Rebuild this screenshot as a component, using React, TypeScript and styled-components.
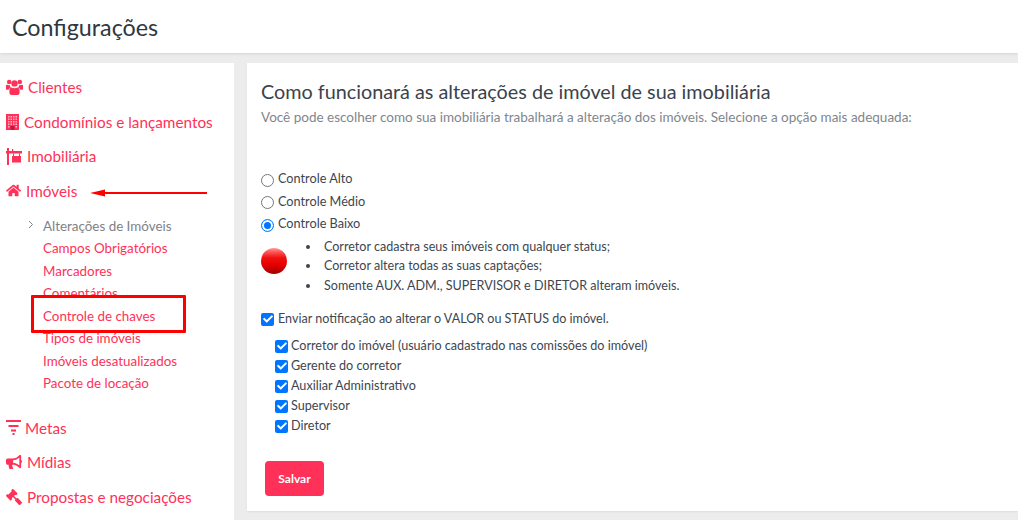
import { FC, ReactNode } from 'react';
import styled, { createGlobalStyle } from 'styled-components';
import { FaHome, FaBullhorn, FaGavel, FaCheck } from 'react-icons/fa';

const GlobalStyle = createGlobalStyle`
    html, body {
        margin: 0;
        padding: 0;
        height: 520px;
        overflow: hidden;
        background: #ececec;
        font-family: Lato, "Liberation Sans", sans-serif;
        color: #3c4650;
    }
    * {
        box-sizing: border-box;
    }
`;

const Page = styled.div`
    position: relative;
    width: 1018px;
    height: 520px;
    overflow: hidden;
`;

const Header = styled.header`
    height: 53px;
    background: #fff;
    padding: 12px 12px 0;
    box-shadow: 0 1px 3px rgba(0, 0, 0, 0.1);
`;

const Title = styled.h1`
    margin: 0;
    font-size: 23.3px;
    line-height: 30px;
    font-weight: 400;
    color: #2f3840;
`;

const Body = styled.div`
    display: flex;
    gap: 13px;
    padding-top: 10px;
`;

const Sidebar = styled.nav`
    width: 234px;
    height: 457px;
    background: #fff;
    padding: 7px 0 0 6px;
`;

const NavItem = styled.a<{ $gap?: number }>`
    display: flex;
    align-items: center;
    height: 34.5px;
    font-size: 15.3px;
    color: #ff3158;
    gap: ${(p) => p.$gap ?? 5}px;

    svg {
        flex: none;
        color: #ff3158;
    }
`;

const SubList = styled.div`
    padding: 6.5px 0 16.2px 37px;
`;

const SubItem = styled.a<{ $active?: boolean }>`
    position: relative;
    display: block;
    height: 22.5px;
    line-height: 22.5px;
    font-size: 13.4px;
    color: ${(p) => (p.$active ? '#7d8288' : '#ff3158')};
`;

const Chevron = styled.svg`
    position: absolute;
    left: -15px;
    top: 5px;
`;

const FlippedGavel = styled(FaGavel)`
    transform: scaleX(-1);
`;

const Main = styled.main`
    width: 771px;
    height: 448px;
    background: #fff;
    padding: 14px 14px;
    box-shadow: 0 1px 2px rgba(0, 0, 0, 0.06);
`;

const Heading = styled.h2`
    margin: 0;
    font-size: 19.8px;
    line-height: 28px;
    font-weight: 400;
    color: #3a434c;
`;

const Subheading = styled.p`
    margin: 2px 0 0;
    font-size: 13.5px;
    line-height: 20px;
    color: #7f868d;
`;

const RadioGroup = styled.div`
    margin-top: 40px;
`;

const RadioRow = styled.label`
    display: flex;
    align-items: center;
    height: 22.5px;
    font-size: 12.7px;
    gap: 4px;
    color: #3c4650;
`;

const RadioCircle = styled.span<{ $checked?: boolean }>`
    display: inline-block;
    width: 13px;
    height: 13px;
    margin-top: 4px;
    border-radius: 50%;
    background: #fff;
    border: 1px solid ${(p) => (p.$checked ? '#0075ff' : '#767676')};
    box-shadow: ${(p) => (p.$checked ? 'inset 0 0 0 2px #fff, inset 0 0 0 7px #0075ff' : 'none')};
`;

const Detail = styled.div`
    display: flex;
    align-items: center;
    margin-top: 2px;
`;

const Ball = styled.span`
    width: 26px;
    height: 26px;
    margin-top: -10px;
    border-radius: 50%;
    background: linear-gradient(#ff9c9c 0%, #ff5a5a 14%, #f01010 38%, #e80000 62%, #c40000 82%, #a00000 100%);
`;

const Bullets = styled.ul`
    margin: 0;
    padding: 0 0 0 34px;
    font-size: 12.55px;
    line-height: 19.5px;
    color: #3c4650;

    li {
        padding-left: 3px;
    }
`;

const NotifyRow = styled.label`
    display: flex;
    align-items: center;
    gap: 4px;
    margin-top: 13px;
    height: 20px;
    font-size: 12.55px;
    color: #3c4650;
`;

const CheckList = styled.div`
    margin: 7px 0 0 14px;
`;

const CheckRow = styled.label`
    display: flex;
    align-items: center;
    gap: 3px;
    height: 20px;
    font-size: 12.6px;
    color: #3c4650;
`;

const CheckBox = styled.span`
    display: inline-flex;
    align-items: center;
    justify-content: center;
    width: 13px;
    height: 13px;
    margin-top: 2px;
    border-radius: 2px;
    background: #0075ff;
    color: #fff;
    font-size: 10px;
`;

const SaveButton = styled.button`
    display: block;
    width: 59px;
    height: 35px;
    margin: 26px 0 0 4px;
    padding: 0;
    border: none;
    border-radius: 4px;
    background: #ff3158;
    color: #fff;
    font-family: inherit;
    font-size: 12px;
    font-weight: 700;
`;

const ArrowMark = styled.svg`
    position: absolute;
    left: 90px;
    top: 188px;
`;

const RedBox = styled.div`
    position: absolute;
    left: 31px;
    top: 295px;
    width: 155px;
    height: 38px;
    border: 3px solid #f00;
    border-radius: 1px;
`;

const UsersIcon: FC = () => (
    <svg width="17" height="16" viewBox="0 0 17 16" fill="#ff3158">
        <circle cx="3.2" cy="3" r="2.3" />
        <circle cx="13.8" cy="3" r="2.3" />
        <circle cx="8.5" cy="4.4" r="3.2" />
        <path d="M0 6.4C0 5.9.6 5.6 1.4 5.8c.8.4 1.7.5 2.4.2.1 1 .6 1.9 1.2 2.5C3.8 9 3 9.8 2.7 10.8H1C.4 10.8 0 10.4 0 9.8Z" />
        <path d="M17 6.4c0-.5-.6-.8-1.4-.6-.8.4-1.7.5-2.4.2-.1 1-.6 1.9-1.2 2.5 1.2.5 2 1.3 2.3 2.3H16c.6 0 1-.4 1-1Z" />
        <path d="M5.4 8.4c1.8 1.1 4.4 1.1 6.2 0 1.2.4 2 1.5 2 3.2v2.2c0 1.2-.8 2.2-2 2.2H5.4c-1.2 0-2-1-2-2.2v-2.2c0-1.7.8-2.8 2-3.2Z" />
    </svg>
);

const BuildingIcon: FC = () => (
    <svg width="13" height="16" viewBox="0 0 13 16">
        <rect width="13" height="16" fill="#ff3158" />
        <g fill="#ffb3c2">
            {[2, 4.5, 7, 9.5].map((y) =>
                [2, 4.5, 7, 9.5].map((x) => <rect key={`${x}-${y}`} x={x} y={y} width="1.5" height="1.5" />),
            )}
            <rect x="2" y="12" width="1.5" height="1.5" />
            <rect x="9.5" y="12" width="1.5" height="1.5" />
        </g>
        <rect x="4.5" y="12" width="4" height="4" fill="#c9173c" />
    </svg>
);

const SignIcon: FC = () => (
    <svg width="16" height="17" viewBox="0 0 16 17" fill="#ff3158">
        <rect x="1" y="0" width="2" height="17" />
        <rect x="0" y="3" width="16" height="2.5" />
        <rect x="6" y="1" width="1.2" height="2" />
        <rect x="7" y="5.5" width="1" height="2.5" />
        <rect x="13" y="5.5" width="1" height="2.5" />
        <rect x="6" y="8" width="9" height="6.5" />
    </svg>
);

const MetasIcon: FC = () => (
    <svg width="15" height="15" viewBox="0 0 15 15" fill="#ff3158">
        <rect x="0" y="0" width="15" height="2" />
        <rect x="2.5" y="5" width="10" height="2" />
        <rect x="5" y="9.5" width="5" height="2" />
        <rect x="6.5" y="13" width="2" height="2" />
    </svg>
);

interface IMainNavProps {
    icon: ReactNode;
    label: string;
    gap?: number;
}

const MainNav: FC<IMainNavProps> = ({ icon, label, gap }) => (
    <NavItem $gap={gap}>
        {icon}
        <span>{label}</span>
    </NavItem>
);

const subItems = [
    'Campos Obrigatórios',
    'Marcadores',
    'Comentários',
    'Controle de chaves',
    'Tipos de imóveis',
    'Imóveis desatualizados',
    'Pacote de locação',
];

const radios = [
    { label: 'Controle Alto', checked: false },
    { label: 'Controle Médio', checked: false },
    { label: 'Controle Baixo', checked: true },
];

const recipients = [
    'Corretor do imóvel (usuário cadastrado nas comissões do imóvel)',
    'Gerente do corretor',
    'Auxiliar Administrativo',
    'Supervisor',
    'Diretor',
];

const App: FC = () => (
    <Page>
        <GlobalStyle />
        <Header>
            <Title>Configurações</Title>
        </Header>
        <Body>
            <Sidebar>
                <MainNav icon={<UsersIcon />} label="Clientes" />
                <MainNav icon={<BuildingIcon />} label="Condomínios e lançamentos" />
                <MainNav icon={<SignIcon />} label="Imobiliária" />
                <MainNav icon={<FaHome size={15} />} label="Imóveis" />
                <SubList>
                    <SubItem $active>
                        <Chevron width="6" height="9" viewBox="0 0 6 9" fill="none" stroke="#7d8288" strokeWidth="1">
                            <path d="M1 1l3.5 3.5L1 8" />
                        </Chevron>
                        Alterações de Imóveis
                    </SubItem>
                    {subItems.map((item) => (
                        <SubItem key={item}>{item}</SubItem>
                    ))}
                </SubList>
                <MainNav icon={<MetasIcon />} label="Metas" gap={4} />
                <MainNav icon={<FaBullhorn size={16} />} label="Mídias" />
                <MainNav icon={<FlippedGavel size={16} />} label="Propostas e negociações" />
            </Sidebar>
            <Main>
                <Heading>Como funcionará as alterações de imóvel de sua imobiliária</Heading>
                <Subheading>
                    Você pode escolher como sua imobiliária trabalhará a alteração dos imóveis. Selecione a opção mais adequada:
                </Subheading>
                <RadioGroup>
                    {radios.map((radio) => (
                        <RadioRow key={radio.label}>
                            <RadioCircle $checked={radio.checked} />
                            {radio.label}
                        </RadioRow>
                    ))}
                </RadioGroup>
                <Detail>
                    <Ball />
                    <Bullets>
                        <li>Corretor cadastra seus imóveis com qualquer status;</li>
                        <li>Corretor altera todas as suas captações;</li>
                        <li>Somente AUX. ADM., SUPERVISOR e DIRETOR alteram imóveis.</li>
                    </Bullets>
                </Detail>
                <NotifyRow>
                    <CheckBox><FaCheck /></CheckBox>
                    Enviar notificação ao alterar o VALOR ou STATUS do imóvel.
                </NotifyRow>
                <CheckList>
                    {recipients.map((item) => (
                        <CheckRow key={item}>
                            <CheckBox><FaCheck /></CheckBox>
                            {item}
                        </CheckRow>
                    ))}
                </CheckList>
                <SaveButton>Salvar</SaveButton>
            </Main>
        </Body>
        <ArrowMark width="118" height="10" viewBox="0 0 118 10">
            <path d="M0 5L15 1.5V4H117V6H15V8.5Z" fill="#f00" />
        </ArrowMark>
        <RedBox />
    </Page>
);

export default App;
